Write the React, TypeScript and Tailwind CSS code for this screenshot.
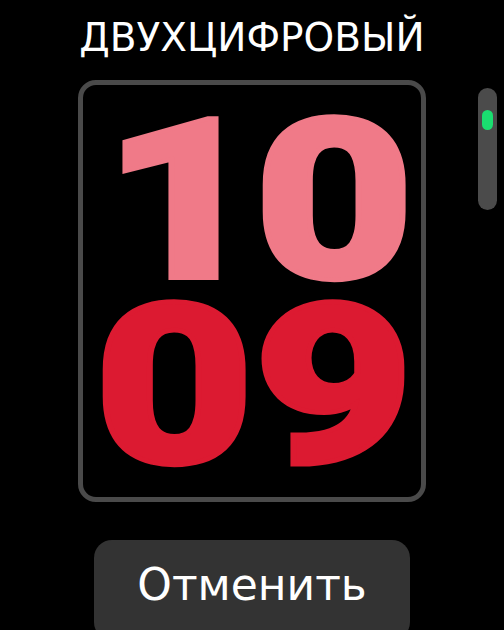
import React from 'react';

function Digit({ ch, tone, align = 'center' }: { ch: string; tone: 'light' | 'dark'; align?: 'center' | 'end' }) {
  const color =
    tone === 'light'
      ? 'text-[#f07a88] [-webkit-text-stroke:6px_#f07a88]'
      : 'text-[#dc1a31] [-webkit-text-stroke:6px_#dc1a31]';
  return (
    <div className={`flex h-[165px] w-[140px] items-center ${align === 'end' ? 'justify-end pr-[20px]' : 'justify-center'}`}>
      <span
        className={`block origin-center scale-x-[1.95] scale-y-[1.55] font-['Roboto',sans-serif] text-[140px] font-bold leading-[106px] [paint-order:stroke_fill] ${color}`}
      >
        {ch}
      </span>
    </div>
  );
}

export default function App() {
  return (
    <div className="relative h-[630px] w-[504px] overflow-hidden bg-black font-['DejaVu_Sans','Noto_Sans',sans-serif] text-white">
      <div className="flex flex-col items-center">
        <h1 className="pt-[18px] text-[39px] leading-[39px] font-normal">ДВУХЦИФРОВЫЙ</h1>

        <div className="mt-[23px] h-[422px] w-[348px] rounded-[18px] border-[5px] border-[#4a4a4a] pl-[21px] pt-[33px]">
          <div className="grid grid-cols-[140px_140px] gap-[20px]">
            <Digit ch="1" tone="light" align="end" />
            <Digit ch="0" tone="light" />
            <Digit ch="0" tone="dark" />
            <Digit ch="9" tone="dark" />
          </div>
        </div>

        <button className="mt-[38px] flex h-[100px] w-[316px] justify-center rounded-[18px] bg-[#333333] pt-[23px] text-[44px] leading-[44px] text-white">
          Отменить
        </button>
      </div>

      {/* digital crown scroll indicator */}
      <div className="absolute left-[478px] top-[88px] flex h-[122px] w-[19px] justify-center rounded-full bg-[#4b4b4b] pt-[22px]">
        <div className="h-[20px] w-[11px] rounded-full bg-[#1ade70]" />
      </div>
    </div>
  );
}
